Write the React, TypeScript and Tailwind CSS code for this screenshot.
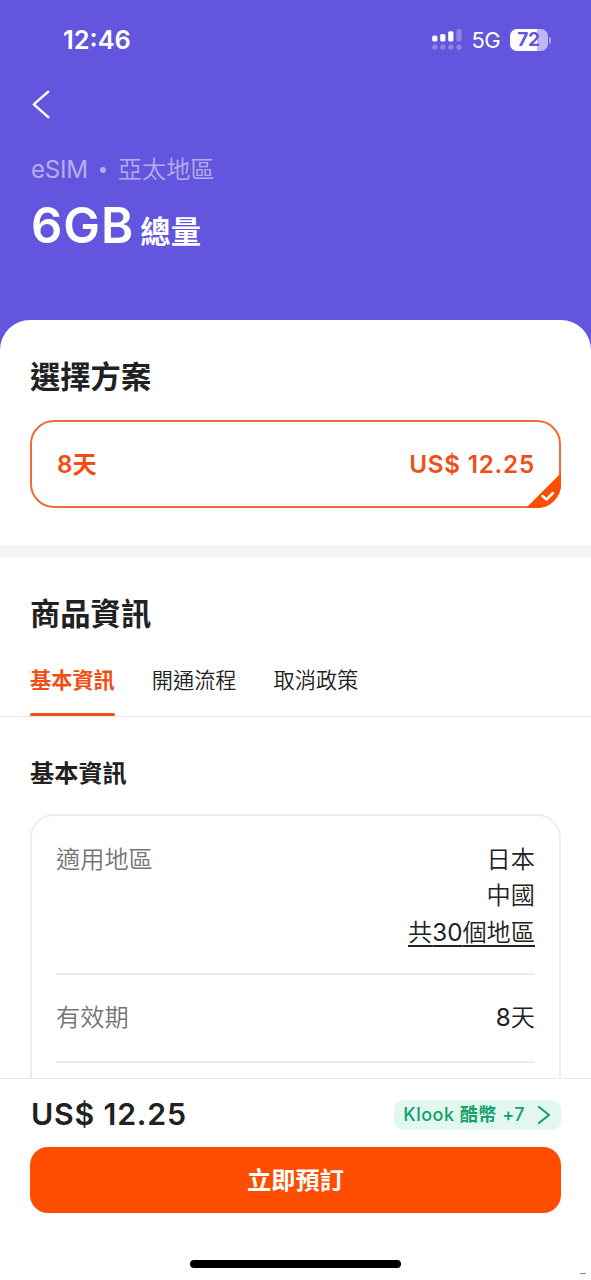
const BackIcon = () => (
  <svg className="h-[30px] w-[20px]" viewBox="0 0 20 30" fill="none" stroke="white" strokeWidth="2.4" strokeLinecap="round" strokeLinejoin="round">
    <path d="M17.3 2.7L2.8 15.4L17.3 28.2" />
  </svg>
);

const SignalIcon = () => (
  <svg className="h-[22px] w-[30px]" viewBox="0 0 30 22" fill="white">
    <rect x="0.2" y="6.5" width="5.2" height="6" rx="1.6" />
    <rect x="8.2" y="4.9" width="5.2" height="7.6" rx="1.6" />
    <rect x="16.2" y="2.2" width="5.2" height="10.3" rx="1.6" />
    <g fillOpacity="0.27">
      <rect x="24.4" y="0" width="5.2" height="12.5" rx="1.6" />
      <circle cx="2.9" cy="18.2" r="2.6" />
      <circle cx="10.9" cy="18.2" r="2.6" />
      <circle cx="18.9" cy="18.2" r="2.6" />
      <circle cx="27" cy="18.2" r="2.6" />
    </g>
  </svg>
);

const StatusBar = () => {
  return (
    <div className="flex h-20 items-center justify-between pr-[40px] pl-[63px] text-white">
      <span className="text-[25.4px] font-semibold">12:46</span>
      <div className="flex items-center">
        <SignalIcon />
        <span className="ml-[10px] text-[22px] tracking-[-0.7px]">5G</span>
        <div className="ml-[10px] flex h-[22px] w-[38px] items-center justify-center rounded-[7px] bg-[linear-gradient(90deg,#fff_72%,#beb7f2_72%)] pr-[1px] text-[19px] font-bold tracking-[-0.3px] text-[#6355dd]">
          72
        </div>
        <div className="ml-[1px] h-[7px] w-[2px] rounded-r-full bg-[#a9a1ec]" />
      </div>
    </div>
  );
};

const Header = () => {
  return (
    <div className="h-[350px] bg-[#6355dd]">
      <StatusBar />
      <div className="px-[31px] pt-[9px] text-white">
        <BackIcon />
        <p className="mt-[34px] flex h-[34px] items-center gap-[12px] text-[24.2px] leading-[34px] font-[350] text-[#b4adf0]">
          <span className="font-normal tracking-[-0.3px]">eSIM</span>
          <span className="size-[6px] rounded-full bg-[#b4adf0]" />
          <span>亞太地區</span>
        </p>
        <p className="mt-[9px] flex items-baseline gap-[6px] leading-[60px] font-semibold">
          <span className="text-[49px] tracking-[1px]">6GB</span>
          <span className="text-[30.3px]">總量</span>
        </p>
      </div>
    </div>
  );
};

const PlanCard = () => {
  return (
    <div className="relative mt-[23px] flex h-[88px] items-center justify-between rounded-[24px] border-2 border-[#f26a35] px-[24px] pt-[2px] text-[24.2px] font-semibold text-[#f04e12]">
      <span className="pl-px">8天</span>
      <span className="tracking-[0.8px]">US$ 12.25</span>
      <svg className="absolute -right-0.5 -bottom-0.5 h-[36px] w-[36px]" viewBox="0 0 36 36" fill="none">
        <path d="M36 1V12A24 24 0 0 1 12 36H1Z" fill="#ff4d00" />
        <path d="M17.5 24L21.5 27.5L28 21" stroke="white" strokeWidth="2.5" strokeLinecap="round" strokeLinejoin="round" />
      </svg>
    </div>
  );
};

const tabs = ["開通流程", "取消政策"];

const Tabs = () => {
  return (
    <div className="flex h-[69px] gap-[37px] border-b border-[#e9e9e9] px-[30px] text-[21.2px] leading-[64px] font-[350] text-[#212121]">
      <div className="relative font-semibold text-[#f04e12]">
        基本資訊
        <span className="absolute inset-x-0 bottom-0 h-[3px] rounded-full bg-[#f04e12]" />
      </div>
      {tabs.map((tab) => (
        <div key={tab}>{tab}</div>
      ))}
    </div>
  );
};

const InfoCard = () => {
  return (
    <div className="mt-[22px] h-[320px] rounded-[24px] border-2 border-[#ededed] px-[24px] text-[24.2px] leading-[36.4px] font-[350] text-[#212121]">
      <div className="flex h-[159px] justify-between border-b-2 border-[#ebebeb] pt-[26px]">
        <span className="text-[#757575]">適用地區</span>
        <div className="text-right">
          <p>日本</p>
          <p>中國</p>
          <p className="underline decoration-[1.5px] underline-offset-[4px]">
            共<span className="font-normal">30</span>個地區
          </p>
        </div>
      </div>
      <div className="flex h-[88px] items-center justify-between border-b-2 border-[#ebebeb]">
        <span className="text-[#757575]">有效期</span>
        <span>
          <span className="font-normal">8</span>天
        </span>
      </div>
    </div>
  );
};

const BottomBar = () => {
  return (
    <div className="h-[202px] border-t border-[#e9e9e9] bg-white px-[30px] pt-[15px]">
      <div className="flex h-[42px] items-center justify-between">
        <span className="pl-px text-[30.3px] font-semibold tracking-[0.8px] text-[#212121]">US$ 12.25</span>
        <div className="flex h-[30px] items-center rounded-[9px] bg-[#e1f7f0] pr-[10px] pl-[9px] text-lg font-medium text-[#16a06a]">
          <span className="tracking-[0.5px]">
            Klook <span className="font-semibold">酷幣</span> +7
          </span>
          <svg className="ml-[12px] h-[20px] w-[14px]" viewBox="0 0 14 20" fill="none" stroke="#16a06a" strokeWidth="2.2" strokeLinecap="round" strokeLinejoin="round">
            <path d="M2 2L12 10L2 18" />
          </svg>
        </div>
      </div>
      <button className="mt-[11px] flex h-[66px] w-full items-center justify-center rounded-[18px] bg-[#ff4d00] pt-[2px] text-[24.2px] font-semibold text-white">
        立即預訂
      </button>
      <div className="mx-auto mt-[47px] h-[8px] w-[211px] rounded-full bg-black" />
      <div className="mt-[5px] -mr-[25px] ml-auto h-[1px] w-[6px] bg-[#888]" />
    </div>
  );
};

export default function App() {
  return (
    <div className="flex h-[1280px] w-[591px] flex-col overflow-hidden bg-white font-['Inter','Noto_Sans_CJK_TC',sans-serif]">
      <Header />
      <div className="relative -mt-[30px] h-[758px] shrink-0 overflow-hidden rounded-t-[30px] bg-white">
        <div className="h-[225px] px-[30px] pt-[37px]">
          <h2 className="text-[30.3px] leading-[40px] font-semibold text-[#212121]">選擇方案</h2>
          <PlanCard />
        </div>
        <div className="h-[12px] bg-[#f4f4f4]" />
        <h2 className="px-[30px] pt-[37px] text-[30.3px] leading-[40px] font-semibold text-[#212121]">商品資訊</h2>
        <div className="pt-[14px]">
          <Tabs />
        </div>
        <div className="px-[30px] pt-[39px]">
          <h3 className="text-[24.2px] leading-[36px] font-semibold text-[#212121]">基本資訊</h3>
          <InfoCard />
        </div>
      </div>
      <BottomBar />
    </div>
  );
}
